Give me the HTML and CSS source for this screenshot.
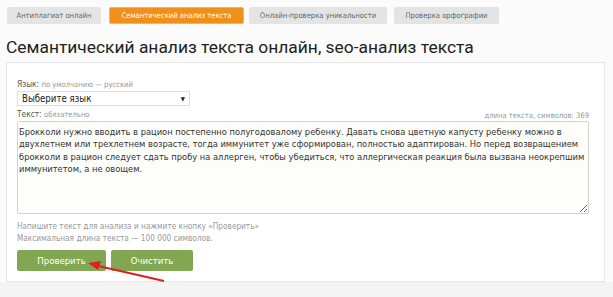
FILE: index.html
```html
<!DOCTYPE html>
<html lang="ru">
<head>
    <meta charset="UTF-8">
    <title>Семантический анализ текста</title>
    <link rel="stylesheet" href="styles.css">
</head>
<body>
    <div class="page">
        <div class="tabs">
            <a class="tab">Антиплагиат онлайн</a>
            <a class="tab active">Семантический анализ текста</a>
            <a class="tab">Онлайн-проверка уникальности</a>
            <a class="tab">Проверка орфографии</a>
        </div>
        <h1>Семантический анализ текста онлайн, seo-анализ текста</h1>
        <div class="card">
            <div class="label">Язык: <span class="note">по умолчанию — русский</span></div>
            <div class="select">Выберите язык <span class="caret">▼</span></div>
            <div class="label-row">
                <div class="label">Текст: <span class="note">обязательно</span></div>
                <div class="note">длина текста, символов: 369</div>
            </div>
            <textarea class="text">Брокколи нужно вводить в рацион постепенно полугодовалому ребенку. Давать снова цветную капусту ребенку можно в
двухлетнем или трехлетнем возрасте, тогда иммунитет уже сформирован, полностью адаптирован. Но перед возвращением
брокколи в рацион следует сдать пробу на аллерген, чтобы убедиться, что аллергическая реакция была вызвана неокрепшим
иммунитетом, а не овощем.</textarea>
            <div class="hint">Напишите текст для анализа и нажмите кнопку «Проверить»<br>Максимальная длина текста — 100 000 символов.</div>
            <div class="buttons">
                <button class="btn btn-check">Проверить</button>
                <button class="btn btn-clear">Очистить</button>
            </div>
            <svg class="arrow" width="80" height="28" viewBox="0 0 80 28">
                <line x1="76" y1="25" x2="6" y2="9" stroke="#e02020" stroke-width="2"/>
                <polygon points="0,7 13,5 10,14" fill="#e02020"/>
            </svg>
        </div>
    </div>
</body>
</html>
```

FILE: styles.css
```css
body {
    margin: 0;
    background-color: #f4f4f4;
    font-family: 'DejaVu Sans Condensed', 'DejaVu Sans', sans-serif;
    color: #333;
}
.page {
    padding: 7px 8px 0 6px;
    background-color: #fbfbfb;
}
.tabs {
    display: flex;
    gap: 7px;
    padding-left: 1px;
}
.tab {
    display: block;
    box-sizing: border-box;
    height: 17px;
    line-height: 17px;
    text-align: center;
    white-space: nowrap;
    background-color: #e4e4e4;
    color: #666;
    font-size: 7.6px;
    border-radius: 2px;
}
.tab:nth-child(1) { width: 94px; }
.tab:nth-child(2) { width: 135px; margin-left: 1px; }
.tab:nth-child(3) { width: 138px; margin-left: -2px; }
.tab:nth-child(4) { width: 105px; }
.tab.active {
    background-color: #f0901a;
    color: #fff;
    border: 1px solid #f7b25c;
    line-height: 15px;
}
h1 {
    margin: 13px 0 5px;
    font-family: Roboto, sans-serif;
    font-weight: normal;
    font-size: 17.4px;
    color: #222;
}
.card {
    position: relative;
    background-color: #fff;
    border: 1px solid #e8e8e8;
    padding: 16px 15px 10px 10px;
}
.label {
    font-size: 8.3px;
    line-height: 11px;
    color: #555;
}
.note {
    font-size: 7.6px;
    color: #999;
}
.select {
    box-sizing: border-box;
    width: 173px;
    height: 15px;
    margin: 1px 0 3px;
    padding: 0 4px;
    border: 1px solid #ddd;
    font-size: 9.6px;
    line-height: 13px;
    color: #222;
    display: flex;
    justify-content: space-between;
}
.caret {
    font-size: 6px;
    color: #222;
}
.label-row {
    display: flex;
    justify-content: space-between;
    align-items: flex-end;
}
.text {
    display: block;
    box-sizing: border-box;
    width: 100%;
    height: 93px;
    margin-top: 1px;
    padding: 4px 1px 2px;
    border: 1px solid #d4d4c4;
    border-radius: 2px;
    background-color: #fdfdf9;
    font-family: 'DejaVu Sans Condensed', 'DejaVu Sans', sans-serif;
    font-size: 9.25px;
    line-height: 12.4px;
    color: #333;
    white-space: pre;
    overflow: hidden;
    resize: vertical;
}
.hint {
    margin-top: 6px;
    font-size: 8.2px;
    line-height: 12px;
    color: #999;
}
.buttons {
    display: flex;
    gap: 5px;
    margin-top: 6px;
}
.btn {
    height: 21px;
    border: none;
    border-radius: 2px;
    background-color: #82a752;
    color: #fff;
    font-family: 'DejaVu Sans Condensed', 'DejaVu Sans', sans-serif;
    font-size: 9.5px;
}
.btn-check { width: 89px; }
.btn-clear { width: 82px; }
.arrow {
    position: absolute;
    left: 81px;
    bottom: -3px;
}
```
